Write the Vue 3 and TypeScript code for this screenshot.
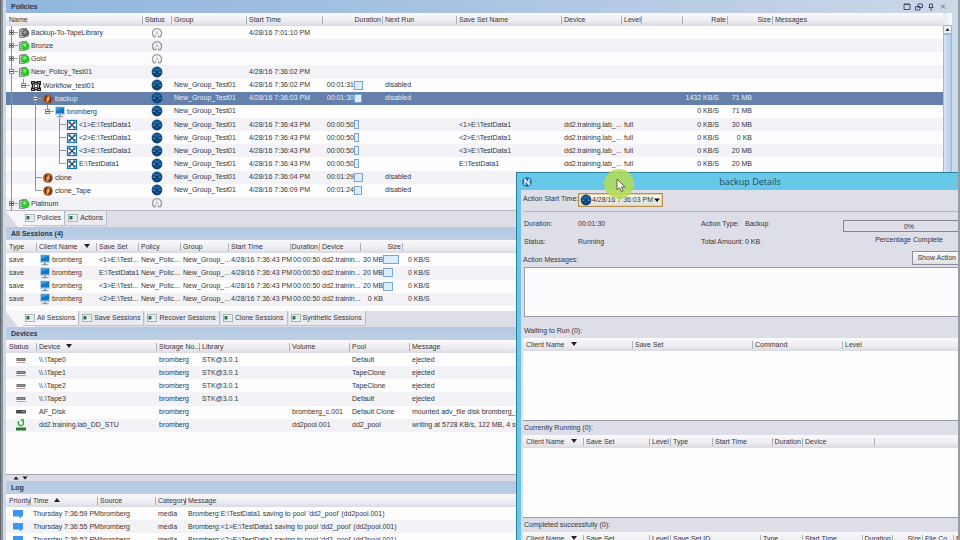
<script setup lang="ts">
import { ref } from 'vue'

interface Column {
  label: string
  width?: number
  right?: boolean
  sort?: 'up' | 'down'
}

interface PolicyRow {
  guides: string[]
  icon: string
  name: string
  running: boolean
  group?: string
  start?: string
  duration?: string
  bar?: number
  next?: string
  saveSet?: string
  device?: string
  level?: string
  rate?: string
  size?: string
  selected?: boolean
}

const policyColumns: Column[] = [
  { label: 'Name', width: 136 },
  { label: 'Status', width: 29 },
  { label: 'Group', width: 75 },
  { label: 'Start Time', width: 76 },
  { label: 'Duration', width: 60, right: true },
  { label: 'Next Run', width: 74 },
  { label: 'Save Set Name', width: 105 },
  { label: 'Device', width: 60 },
  { label: 'Level', width: 20 },
  { label: '', width: 41 },
  { label: 'Rate', width: 45, right: true },
  { label: 'Size', width: 45, right: true },
  { label: 'Messages' },
]

const group = 'New_Group_Test01'
const device = 'dd2.training.lab_...'

const policies: PolicyRow[] = [
  { guides: ['plus'], icon: 'policy-off', name: 'Backup-To-TapeLibrary', running: false, start: '4/28/16 7:01:10 PM' },
  { guides: ['plus'], icon: 'policy', name: 'Bronze', running: false },
  { guides: ['plus'], icon: 'policy', name: 'Gold', running: false },
  { guides: ['minus'], icon: 'policy', name: 'New_Policy_Test01', running: true, start: '4/28/16 7:36:02 PM' },
  { guides: ['line', 'minus last'], icon: 'workflow', name: 'Workflow_test01', running: true, group, start: '4/28/16 7:36:02 PM', duration: '00:01:31', bar: 9, next: 'disabled' },
  { guides: ['line', 'none', 'minus'], icon: 'action', name: 'backup', running: true, group, start: '4/28/16 7:36:03 PM', duration: '00:01:30', bar: 8, next: 'disabled', rate: '1432 KB/S', size: '71 MB', selected: true },
  { guides: ['line', 'none', 'line', 'minus last'], icon: 'client', name: 'bromberg', running: true, group, rate: '0 KB/S', size: '71 MB' },
  { guides: ['line', 'none', 'line', 'none', 'tee'], icon: 'saveset', name: '<1>E:\\TestData1', running: true, group, start: '4/28/16 7:36:43 PM', duration: '00:00:50', bar: 5, saveSet: '<1>E:\\TestData1', device, level: 'full', rate: '0 KB/S', size: '30 MB' },
  { guides: ['line', 'none', 'line', 'none', 'tee'], icon: 'saveset', name: '<2>E:\\TestData1', running: true, group, start: '4/28/16 7:36:43 PM', duration: '00:00:50', bar: 5, saveSet: '<2>E:\\TestData1', device, level: 'full', rate: '0 KB/S', size: '0 KB' },
  { guides: ['line', 'none', 'line', 'none', 'tee'], icon: 'saveset', name: '<3>E:\\TestData1', running: true, group, start: '4/28/16 7:36:43 PM', duration: '00:00:50', bar: 5, saveSet: '<3>E:\\TestData1', device, level: 'full', rate: '0 KB/S', size: '20 MB' },
  { guides: ['line', 'none', 'line', 'none', 'tee last'], icon: 'saveset', name: 'E:\\TestData1', running: true, group, start: '4/28/16 7:36:43 PM', duration: '00:00:50', bar: 5, saveSet: 'E:\\TestData1', device, level: 'full', rate: '0 KB/S', size: '20 MB' },
  { guides: ['line', 'none', 'tee'], icon: 'action', name: 'clone', running: true, group, start: '4/28/16 7:36:04 PM', duration: '00:01:29', bar: 9, next: 'disabled' },
  { guides: ['line', 'none', 'tee last'], icon: 'action', name: 'clone_Tape', running: true, group, start: '4/28/16 7:36:09 PM', duration: '00:01:24', bar: 8, next: 'disabled' },
  { guides: ['plus'], icon: 'policy', name: 'Platinum', running: false },
]

const sessionColumns: Column[] = [
  { label: 'Type', width: 30 },
  { label: 'Client Name', width: 60, sort: 'down' },
  { label: 'Save Set', width: 42 },
  { label: 'Policy', width: 42 },
  { label: 'Group', width: 48 },
  { label: 'Start Time', width: 62 },
  { label: 'Duration', width: 29, right: true },
  { label: 'Device', width: 41 },
  { label: 'Size', width: 42, right: true },
  { label: '' },
]

const sessions = [
  { saveSet: '<1>E:\\Test...', size: '30 MB', bar: 16 },
  { saveSet: 'E:\\TestData1', size: '20 MB', bar: 10 },
  { saveSet: '<3>E:\\Test...', size: '20 MB', bar: 10 },
  { saveSet: '<2>E:\\Test...', size: '0 KB', bar: 0 },
]

const deviceColumns: Column[] = [
  { label: 'Status', width: 30 },
  { label: 'Device', width: 120, sort: 'down' },
  { label: 'Storage No...', width: 43 },
  { label: 'Library', width: 90 },
  { label: 'Volume', width: 60 },
  { label: 'Pool', width: 60 },
  { label: 'Message' },
]

const devices = [
  { icon: 'tape', cells: ['\\\\.\\Tape0', 'bromberg', 'STK@3.0.1', '', 'Default', 'ejected'] },
  { icon: 'tape', cells: ['\\\\.\\Tape1', 'bromberg', 'STK@3.0.1', '', 'TapeClone', 'ejected'] },
  { icon: 'tape', cells: ['\\\\.\\Tape2', 'bromberg', 'STK@3.0.1', '', 'TapeClone', 'ejected'] },
  { icon: 'tape', cells: ['\\\\.\\Tape3', 'bromberg', 'STK@3.0.1', '', 'Default', 'ejected'] },
  { icon: 'disk', cells: ['AF_Disk', 'bromberg', '', 'bromberg_c.001', 'Default Clone', 'mounted adv_file disk bromberg_c.001'] },
  { icon: 'writing', cells: ['dd2.training.lab_DD_STU', 'bromberg', '', 'dd2pool.001', 'dd2_pool', 'writing at 5728 KB/s, 122 MB, 4 sessions'] },
]

const logColumns: Column[] = [
  { label: 'Priority', width: 24 },
  { label: 'Time', width: 67, sort: 'up' },
  { label: 'Source', width: 58 },
  { label: 'Category', width: 30 },
  { label: 'Message' },
]

const logs = [
  { time: 'Thursday 7:36:59 PM', message: "Bromberg:E:\\TestData1 saving to pool 'dd2_pool' (dd2pool.001)" },
  { time: 'Thursday 7:36:55 PM', message: "Bromberg:<1>E:\\TestData1 saving to pool 'dd2_pool' (dd2pool.001)" },
  { time: 'Thursday 7:36:52 PM', message: "Bromberg:<2>E:\\TestData1 saving to pool 'dd2_pool' (dd2pool.001)" },
]

const queues: { title: string; kind: string; columns: Column[] }[] = [
  {
    title: 'Waiting to Run (0):',
    kind: 'waiting',
    columns: [
      { label: 'Client Name', width: 109, sort: 'down' },
      { label: 'Save Set', width: 120 },
      { label: 'Command', width: 90 },
      { label: 'Level' },
    ],
  },
  {
    title: 'Currently Running (0):',
    kind: 'running',
    columns: [
      { label: 'Client Name', width: 60, sort: 'down' },
      { label: 'Save Set', width: 66 },
      { label: 'Level', width: 21 },
      { label: 'Type', width: 42 },
      { label: 'Start Time', width: 60 },
      { label: 'Duration', width: 30, right: true },
      { label: 'Device', width: 72 },
      { label: '' },
    ],
  },
  {
    title: 'Completed successfully (0):',
    kind: 'completed',
    columns: [
      { label: 'Client Name', width: 60, sort: 'down' },
      { label: 'Save Set', width: 66 },
      { label: 'Level', width: 21 },
      { label: 'Save Set ID', width: 90 },
      { label: 'Type', width: 42 },
      { label: 'Start Time', width: 60 },
      { label: 'Duration', width: 30, right: true },
      { label: 'Size', width: 30, right: true },
      { label: 'File Co...', width: 31 },
      { label: 'Messages' },
    ],
  },
]

const policyTabs = ['Policies', 'Actions']
const sessionTabs = ['All Sessions', 'Save Sessions', 'Recover Sessions', 'Clone Sessions', 'Synthetic Sessions']
const activePolicyTab = ref('Policies')
const activeSessionTab = ref('All Sessions')
const startTime = ref('4/28/16 7:36:03 PM')
const actionMessages = ref('')
</script>

<template>
  <svg class="defs" aria-hidden="true">
    <symbol id="i-policy" viewBox="0 0 12 12">
      <path d="M1.500 2.500L4 1h5v7l-2.500 2.500h-5z" fill="#8a9a8c" />
      <path d="M1.500 2.500h5v8h-5z" fill="#c3cdc4" stroke="#647566" stroke-width=".6" />
      <path d="M2.500 4.500h3M2.500 6.500h3M2.500 8.500h3" stroke="#5b6b5d" stroke-width=".7" />
      <circle cx="7.500" cy="6.300" r="4" fill="#2fc52c" />
      <circle cx="6.700" cy="5" r="1.700" fill="#85ec7b" />
    </symbol>
    <symbol id="i-policy-off" viewBox="0 0 12 12">
      <path d="M1.500 2.500L4 1h5v7l-2.500 2.500h-5z" fill="#858585" />
      <path d="M1.500 2.500h5v8h-5z" fill="#c6c6c6" stroke="#666" stroke-width=".6" />
      <path d="M2.500 4.500h3M2.500 6.500h3M2.500 8.500h3" stroke="#555" stroke-width=".7" />
      <circle cx="7.500" cy="6.300" r="3.800" fill="#686868" />
      <circle cx="6.800" cy="5.300" r="1.400" fill="#a3a3a3" />
    </symbol>
    <symbol id="i-workflow" viewBox="0 0 12 12">
      <path d="M1 1h4v3.500H1zM6.500 1h4.500v4H8.500v-1h-2zM1 7.500h4V11H1zM7 7.500h4V11H7z" fill="#1e1e1e" />
      <path d="M2.500 4v4M5 2.500h2M5 9.500h2M9.500 5v3" stroke="#1e1e1e" stroke-width="1.400" fill="none" />
      <circle cx="6" cy="6" r="1.800" fill="none" stroke="#333" />
      <path d="M2.300 2.200h1.200v1H2.300zM8.300 2.200h1.200v1H8.300zM2.300 9h1.200v1H2.300zM8.300 9h1.200v1H8.300z" fill="#fff" />
    </symbol>
    <symbol id="i-action" viewBox="0 0 12 12">
      <circle cx="6" cy="6" r="4.800" fill="#8e4a22" />
      <circle cx="6" cy="6" r="4" fill="#c8702f" />
      <path d="M5.300 2.800C2.700 3.300 2.600 7 4.300 8.300M6.700 9.200C9.300 8.700 9.400 5 7.700 3.700" fill="none" stroke="#4b1f0b" stroke-width="1.200" />
      <path d="M5.200 6.500l2.200-2.700M4.800 8.200l2-2.400" stroke="#ffd9a8" stroke-width=".9" />
    </symbol>
    <symbol id="i-client" viewBox="0 0 12 12">
      <rect x="1" y=".5" width="10" height="8.500" fill="#b4d0e6" />
      <rect x="2" y="1.500" width="8" height="6" fill="#1576c2" />
      <path d="M2 1.500h8L2 5z" fill="#3e9ade" />
      <path d="M5 9h2v1.300h2.500v1h-7v-1H5z" fill="#8294a3" />
    </symbol>
    <symbol id="i-saveset" viewBox="0 0 12 12">
      <rect x="1.500" y="1.500" width="9" height="9" fill="#fff" stroke="#1a73a8" stroke-width="1.200" />
      <path d="M3 3l6 6M9 3L3 9" stroke="#163e66" stroke-width="1.200" />
      <path d="M2.500 2.500h2v2h-2zM7.500 2.500h2v2h-2zM2.500 7.500h2v2h-2zM7.500 7.500h2v2h-2z" fill="#24587f" />
    </symbol>
    <symbol id="i-running" viewBox="0 0 12 12">
      <circle cx="6" cy="6" r="5.400" fill="#0b4379" />
      <path d="M1.500 4.500Q2.500 1.800 5.300 1.300V4.500zM6.700 1.300Q9.500 2 10.400 4.500H6.700z" fill="#1d639c" />
      <path d="M6 3v6" stroke="#3f8dc4" />
      <path d="M1.800 6.200h8.400" stroke="#5fa6d8" />
      <circle cx="6" cy="6.200" r="1.300" fill="#082c50" />
    </symbol>
    <symbol id="i-idle" viewBox="0 0 12 12">
      <path d="M3.200 9.900A4.600 4.600 0 1 1 8.800 9.900" fill="none" stroke="#979797" stroke-width="1.300" />
      <path d="M2.500 10h2.200V8.200M9.500 10H7.300V8.200" fill="none" stroke="#979797" />
      <path d="M6 3.600V5.500M4 7.500Q6 4.200 8 7.500" fill="none" stroke="#b4b4b4" />
    </symbol>
    <symbol id="i-tab" viewBox="0 0 12 10">
      <rect x="1.500" y="1.500" width="9" height="7" fill="#edf3f1" stroke="#9aa8a6" stroke-width=".8" />
      <path d="M2.500 3h3v3.500h-3z" fill="#2c6f5c" />
      <path d="M6.500 3.500h3M6.500 5.500h3" stroke="#c3cecb" stroke-width=".7" />
    </symbol>
    <symbol id="i-tape" viewBox="0 0 12 12">
      <rect x="1.500" y="4" width="9" height="3" fill="#747474" />
      <path d="M3 5.500h6" stroke="#aaa" stroke-width=".6" />
      <path d="M1.500 8.500h9" stroke="#c09aa6" />
    </symbol>
    <symbol id="i-disk" viewBox="0 0 12 12">
      <rect x="1" y="4" width="10" height="3.500" rx="1" fill="#4b4b4b" />
      <path d="M7 5.500h3" stroke="#bbb" stroke-width=".8" />
    </symbol>
    <symbol id="i-writing" viewBox="0 0 12 12">
      <rect x="1" y="8.500" width="10" height="3" fill="#2f7a35" />
      <path d="M4 2.200A2.600 2.600 0 1 0 8.300 3" fill="none" stroke="#24a82c" stroke-width="1.300" />
      <path d="M5 .3h3.800v3.600z" fill="#24a82c" />
    </symbol>
    <symbol id="i-note" viewBox="0 0 12 10">
      <path d="M1 1h10v6.500H9.500L8.800 9.500 7 7.500H1z" fill="#3e95ee" />
    </symbol>
  </svg>

  <div class="desktop">
    <main class="console">
      <section class="panel policies">
        <header class="title">
          <h2>Policies</h2>
          <div class="tools">
            <button aria-label="Maximize">
              <svg viewBox="0 0 8 8"><path d="M1 1.500h6v5H1zM1 1h6" fill="none" stroke="#41506a" /></svg>
            </button>
            <button aria-label="Float">
              <svg viewBox="0 0 8 8"><path d="M3 1h4.500v3.500H3zM.5 3.500H5V7H.5z" fill="none" stroke="#41506a" /></svg>
            </button>
            <button aria-label="Pin">
              <svg viewBox="0 0 8 8"><path d="M2.500 1h3v3.500h-3zM1.500 4.500h5M4 4.500V8" fill="none" stroke="#41506a" /></svg>
            </button>
            <button aria-label="Close">
              <svg viewBox="0 0 8 8"><path d="M2 1.500l4 4M6 1.500l-4 4" stroke="#65718a" /></svg>
            </button>
          </div>
        </header>
        <div class="scroll">
          <table class="grid policy-table">
            <colgroup>
              <col v-for="(c, i) in policyColumns" :key="i" :style="{ width: c.width ? c.width + 'px' : 'auto' }" />
            </colgroup>
            <thead>
              <tr>
                <th v-for="(c, i) in policyColumns" :key="i" :class="{ right: c.right }">{{ c.label }}</th>
              </tr>
            </thead>
            <tbody>
              <tr v-for="(p, i) in policies" :key="i" :class="{ selected: p.selected }">
                <td class="tree-cell">
                  <div class="tree">
                    <span v-for="(g, k) in p.guides" :key="k" class="guide" :class="g"></span>
                    <svg class="icon"><use :href="'#i-' + p.icon" /></svg>
                    <span class="label">{{ p.name }}</span>
                  </div>
                </td>
                <td class="center"><svg class="icon"><use :href="p.running ? '#i-running' : '#i-idle'" /></svg></td>
                <td>{{ p.group }}</td>
                <td>{{ p.start }}</td>
                <td>
                  <div class="metered">
                    <span class="time">{{ p.duration }}</span>
                    <span v-if="p.bar" class="bar" :style="{ width: p.bar + 'px' }"></span>
                  </div>
                </td>
                <td>{{ p.next }}</td>
                <td>{{ p.saveSet }}</td>
                <td>{{ p.device }}</td>
                <td>{{ p.level }}</td>
                <td></td>
                <td class="rate">{{ p.rate }}</td>
                <td class="size">{{ p.size }}</td>
                <td></td>
              </tr>
            </tbody>
          </table>
          <div class="scrollbar">
            <button aria-label="Scroll up">
              <svg viewBox="0 0 8 8"><path d="M1.500 5.500h5L4 2.500z" fill="#111" /></svg>
            </button>
            <div class="thumb"></div>
          </div>
        </div>
        <nav class="tabs">
          <button v-for="t in policyTabs" :key="t" :class="{ active: t === activePolicyTab }" @click="activePolicyTab = t">
            <svg class="tab-icon"><use href="#i-tab" /></svg>{{ t }}
          </button>
        </nav>
      </section>

      <section class="panel sessions">
        <header class="title"><h2>All Sessions (4)</h2></header>
        <div class="body">
          <table class="grid session-table">
            <colgroup>
              <col v-for="(c, i) in sessionColumns" :key="i" :style="{ width: c.width ? c.width + 'px' : 'auto' }" />
            </colgroup>
            <thead>
              <tr>
                <th v-for="(c, i) in sessionColumns" :key="i" :class="{ right: c.right }">
                  {{ c.label }}<span v-if="c.sort" class="sort" :class="c.sort"></span>
                </th>
              </tr>
            </thead>
            <tbody>
              <tr v-for="(s, i) in sessions" :key="i">
                <td>save</td>
                <td>
                  <div class="with-icon"><svg class="icon"><use href="#i-client" /></svg>bromberg</div>
                </td>
                <td>{{ s.saveSet }}</td>
                <td>New_Polic...</td>
                <td>New_Group_...</td>
                <td>4/28/16 7:36:43 PM</td>
                <td>00:00:50</td>
                <td>dd2.trainin...</td>
                <td>
                  <div class="metered">
                    <span class="amount">{{ s.size }}</span>
                    <span v-if="s.bar" class="bar" :style="{ width: s.bar + 'px' }"></span>
                  </div>
                </td>
                <td class="throughput">0 KB/S</td>
              </tr>
            </tbody>
          </table>
        </div>
        <nav class="tabs">
          <button v-for="t in sessionTabs" :key="t" :class="{ active: t === activeSessionTab }" @click="activeSessionTab = t">
            <svg class="tab-icon"><use href="#i-tab" /></svg>{{ t }}
          </button>
        </nav>
      </section>

      <section class="panel devices">
        <header class="title"><h2>Devices</h2></header>
        <div class="body">
          <table class="grid device-table">
            <colgroup>
              <col v-for="(c, i) in deviceColumns" :key="i" :style="{ width: c.width ? c.width + 'px' : 'auto' }" />
            </colgroup>
            <thead>
              <tr>
                <th v-for="(c, i) in deviceColumns" :key="i">
                  {{ c.label }}<span v-if="c.sort" class="sort" :class="c.sort"></span>
                </th>
              </tr>
            </thead>
            <tbody>
              <tr v-for="(d, i) in devices" :key="i">
                <td class="center"><svg class="icon"><use :href="'#i-' + d.icon" /></svg></td>
                <td v-for="(cell, k) in d.cells" :key="k">{{ cell }}</td>
              </tr>
            </tbody>
          </table>
        </div>
        <div class="splitter">
          <button aria-label="Expand up"><svg viewBox="0 0 8 6"><path d="M1.500 4.500h5L4 1.500z" fill="#111" /></svg></button>
          <button aria-label="Expand down"><svg viewBox="0 0 8 6"><path d="M1.500 1.500h5L4 4.500z" fill="#111" /></svg></button>
        </div>
      </section>

      <section class="panel log">
        <header class="title"><h2>Log</h2></header>
        <div class="body">
          <table class="grid">
            <colgroup>
              <col v-for="(c, i) in logColumns" :key="i" :style="{ width: c.width ? c.width + 'px' : 'auto' }" />
            </colgroup>
            <thead>
              <tr>
                <th v-for="(c, i) in logColumns" :key="i">
                  {{ c.label }}<span v-if="c.sort" class="sort" :class="c.sort"></span>
                </th>
              </tr>
            </thead>
            <tbody>
              <tr v-for="(l, i) in logs" :key="i">
                <td class="center"><svg class="note-icon"><use href="#i-note" /></svg></td>
                <td>{{ l.time }}</td>
                <td>bromberg</td>
                <td>media</td>
                <td>{{ l.message }}</td>
              </tr>
            </tbody>
          </table>
        </div>
      </section>
    </main>

    <section class="dialog" role="dialog" aria-labelledby="dialog-title">
      <header class="dialog-bar">
        <svg class="app-icon" viewBox="0 0 10 10">
          <circle cx="5" cy="5" r="4.800" fill="#2172ad" />
          <path d="M3 8V2.500l4 5V2" fill="none" stroke="#fff" stroke-width="1.300" />
        </svg>
        <h1 id="dialog-title">backup Details</h1>
      </header>
      <div class="dialog-body">
        <div class="start-row">
          <label for="start">Action Start Time:</label>
          <div class="picker">
            <svg class="icon"><use href="#i-running" /></svg>
            <select id="start" v-model="startTime">
              <option>4/28/16 7:36:03 PM</option>
            </select>
            <svg class="caret" viewBox="0 0 6 6"><path d="M0 1.500h6L3 5z" fill="#111" /></svg>
          </div>
        </div>
        <div class="summary">
          <dl>
            <dt>Duration:</dt>
            <dd>00:01:30</dd>
            <dt>Status:</dt>
            <dd>Running</dd>
          </dl>
          <dl class="second">
            <dt>Action Type:</dt>
            <dd>Backup</dd>
            <dt>Total Amount:</dt>
            <dd>0 KB</dd>
          </dl>
          <div class="progress">
            <div class="progress-box" role="progressbar" aria-valuenow="0">0%</div>
            <span>Percentage Complete</span>
          </div>
        </div>
        <div class="messages-head">
          <label for="messages">Action Messages:</label>
          <button class="log-button">Show Action Log</button>
        </div>
        <textarea id="messages" v-model="actionMessages" readonly></textarea>
        <div v-for="q in queues" :key="q.kind" class="queue" :class="q.kind">
          <h3>{{ q.title }}</h3>
          <div class="queue-body">
            <table class="grid">
              <colgroup>
                <col v-for="(c, i) in q.columns" :key="i" :style="{ width: c.width ? c.width + 'px' : 'auto' }" />
              </colgroup>
              <thead>
                <tr>
                  <th v-for="(c, i) in q.columns" :key="i" :class="{ right: c.right }">
                    {{ c.label }}<span v-if="c.sort" class="sort" :class="c.sort"></span>
                  </th>
                </tr>
              </thead>
            </table>
          </div>
        </div>
      </div>
    </section>

    <div class="edge"></div>
    <svg class="pointer" viewBox="0 0 34 34" aria-hidden="true">
      <circle cx="17" cy="16" r="15" fill="#b6dc55" fill-opacity=".85" />
      <path d="M15 11v11l2.600-2.300 1.800 4 1.800-.8-1.800-3.900h3.400z" fill="#fff" stroke="#3c4a2a" stroke-width=".8" />
    </svg>
  </div>
</template>

<style>
body {
  margin: 0;
  overflow: hidden;
}
</style>

<style scoped>
.defs {
  position: absolute;
  width: 0;
  height: 0;
}
.desktop {
  position: relative;
  height: 100vh;
  overflow: hidden;
  box-sizing: border-box;
  padding: 0 8px 0 6px;
  background: linear-gradient(90deg, #62666c 0 1px, #8d949b 1px 3px, #cbdae8 3px 100%);
  font-family: 'Liberation Sans', Arial, sans-serif;
  font-size: 7px;
  line-height: 12px;
  color: #353539;
}
button,
select,
textarea {
  font: inherit;
  color: inherit;
  margin: 0;
}
h1,
h2,
h3,
dl,
dd {
  margin: 0;
}
.console {
  display: flex;
  flex-direction: column;
  height: 100%;
}
.panel {
  display: flex;
  flex-direction: column;
}
.title {
  display: flex;
  align-items: center;
  justify-content: space-between;
  height: 13px;
  padding: 0 5px;
  background: linear-gradient(180deg, #b4cae2, #bccfe5);
}
.policies .title {
  background: linear-gradient(90deg, #90b6dd, #a9c4e2 50%, #cdd7e8);
}
.title h2 {
  font-size: 7px;
  color: #24364f;
}
.tools {
  display: flex;
  gap: 4px;
}
.tools button {
  width: 8px;
  height: 8px;
  padding: 0;
  border: 0;
  background: none;
}
.tools svg,
.scrollbar svg,
.splitter svg {
  display: block;
  width: 8px;
}

.grid {
  width: 100%;
  table-layout: fixed;
  border-collapse: collapse;
  background: #fdfdfe;
}
.grid th {
  height: 13px;
  padding: 0 0 0 3px;
  font-weight: normal;
  text-align: left;
  white-space: nowrap;
  background: linear-gradient(180deg, #fafafc, #ededf2 60%, #dadae1);
}
.grid th + th {
  background:
    linear-gradient(#aeb0b8, #aeb0b8) 0 50% / 1px 8px no-repeat,
    linear-gradient(180deg, #fafafc, #ededf2 60%, #dadae1);
}
.grid th.right {
  padding: 0 1px 0 0;
  text-align: right;
}
.grid td {
  height: 13px;
  padding: 0 0 0 3px;
  white-space: nowrap;
}
.grid tbody tr:nth-child(even) {
  background: #f2f2f7;
}
.grid tbody tr.selected {
  background: #6480ab;
  color: #e9eef7;
}
.grid td.center {
  padding: 0;
  text-align: center;
}
.session-table {
  height: 66px;
}
.device-table {
  height: 92px;
}
.sort {
  display: inline-block;
  margin-left: 6px;
  border: 3px solid transparent;
}
.sort.down {
  border-top: 4px solid #222;
  border-bottom: 0;
  vertical-align: 1px;
}
.sort.up {
  border-bottom: 4px solid #222;
  border-top: 0;
  vertical-align: 1px;
}
.icon {
  display: block;
  flex: none;
  width: 12px;
  height: 12px;
}
.center .icon,
.note-icon {
  display: block;
  margin: 0 auto;
}
.note-icon {
  width: 12px;
  height: 10px;
}

.scroll {
  display: flex;
  height: 198px;
  border-bottom: 1px solid #b9b9c4;
  box-sizing: border-box;
}
.policy-table {
  flex: 1;
  height: 197px;
}
.grid .tree-cell {
  padding: 0;
}
.tree {
  display: flex;
  align-items: center;
  height: 14px;
  margin-bottom: -1px;
}
.tree .label {
  padding-left: 1px;
}
.guide {
  position: relative;
  align-self: stretch;
  width: 12px;
}
.guide::before {
  content: '';
  position: absolute;
  top: 0;
  bottom: 0;
  left: 5px;
  border-left: 1px solid #a08c8c;
}
.guide.none::before {
  display: none;
}
.guide.last::before {
  bottom: 50%;
}
.guide.tee::after {
  content: '';
  position: absolute;
  top: 6px;
  left: 6px;
  right: 0;
  border-top: 1px solid #9a9aa0;
}
.guide.plus::after,
.guide.minus::after {
  content: '';
  position: absolute;
  top: 4px;
  left: 3px;
  width: 5px;
  height: 5px;
  box-sizing: border-box;
  border: 1px solid #8c8c94;
  background: linear-gradient(#444, #444) 50% 50% / 3px 1px no-repeat #fff;
}
.guide.plus::after {
  background:
    linear-gradient(#444, #444) 50% 50% / 3px 1px no-repeat,
    linear-gradient(#444, #444) 50% 50% / 1px 3px no-repeat #fff;
}
.guide.plus,
.guide.minus {
  background: linear-gradient(#9a9aa0, #9a9aa0) 100% 6px / 4px 1px no-repeat;
}
.metered {
  display: flex;
  align-items: center;
  height: 13px;
}
.metered .time {
  min-width: 29px;
}
.metered .time,
.metered .amount {
  text-align: right;
}
.metered .amount {
  width: 20px;
}
.metered .bar {
  box-sizing: border-box;
  height: 9px;
  border: 1px solid #7ba6cf;
  background: #dcedfb;
}
.grid td.rate {
  padding: 0 8px 0 0;
  text-align: right;
}
.grid td.size {
  padding: 0 20px 0 0;
  text-align: right;
}
.grid td.throughput {
  padding-left: 6px;
}
.scrollbar {
  width: 9px;
  padding-top: 12px;
  background: linear-gradient(90deg, #e6ebf3, #f7f9fc);
}
.scrollbar button {
  display: block;
  width: 9px;
  height: 9px;
  padding: 0;
  border: 1px solid #a9b4c6;
  background: #eef2f8;
}
.scrollbar svg {
  width: 7px;
}
.thumb {
  height: 176px;
  border: 1px solid #a3b8d4;
  box-sizing: border-box;
  background: linear-gradient(90deg, #d9e6f6, #b4cbe8);
}

.tabs {
  display: flex;
  align-items: flex-start;
  gap: 1px;
  height: 16px;
  padding-left: 17px;
  background: linear-gradient(52deg, #d9d9e4 9px, #f5f5fa 10px 22px, #dedee8 23px);
}
.tabs button {
  display: flex;
  align-items: center;
  gap: 1px;
  height: 15px;
  padding: 0 3px 0 1px;
  border: 0;
  border-right: 1px solid #bcbcc9;
  border-bottom: 1px solid #c3c3cf;
  background: #eaeaf1;
  white-space: nowrap;
}
.tabs button.active {
  background: #f5f5fa;
}
.tab-icon {
  width: 12px;
  height: 10px;
}

.with-icon {
  display: flex;
  align-items: center;
  gap: 1px;
}
.body {
  overflow: hidden;
  background: #fdfdfe;
}
.sessions .body {
  height: 71px;
}
.devices .body {
  height: 134px;
}
.splitter {
  display: flex;
  gap: 1px;
  height: 6px;
  padding-left: 6px;
  border-top: 1px solid #a8a8b3;
  background: #dcdce6;
}
.splitter button {
  width: 8px;
  height: 6px;
  padding: 0;
  border: 0;
  background: none;
}
.log {
  flex: 1;
  min-height: 0;
}
.log .body {
  flex: 1;
}

.dialog {
  position: absolute;
  top: 172px;
  left: 516px;
  right: -24px;
  bottom: 0;
  display: flex;
  flex-direction: column;
  box-sizing: border-box;
  border: 1px solid #2c7e9f;
  border-bottom: 0;
  background: #67c8e8;
}
.dialog-bar {
  display: flex;
  align-items: center;
  height: 17px;
  padding: 0 15px 0 5px;
}
.app-icon {
  width: 10px;
  height: 10px;
}
.dialog-bar h1 {
  flex: 1;
  font: 9px/17px 'Open Sans', 'Noto Sans', sans-serif;
  text-align: center;
  color: #1f4a63;
}
.dialog-body {
  display: flex;
  flex: 1;
  flex-direction: column;
  min-height: 0;
  margin: 0 4px;
  padding: 0 4px 0 2px;
  overflow: hidden;
  background: #dedee8;
}
.dialog-body > * {
  flex: none;
}
.start-row {
  display: flex;
  align-items: flex-start;
  gap: 1px;
  height: 22px;
  padding-top: 3px;
  box-sizing: border-box;
  border-bottom: 1px solid #b4b4bf;
}
.start-row label {
  width: 54px;
  white-space: nowrap;
}
.picker {
  display: flex;
  align-items: center;
  box-sizing: border-box;
  width: 85px;
  height: 14px;
  padding: 0 2px 0 1px;
  border: 1px solid #b98e4e;
  background: linear-gradient(#fbfbf6, #e2decf);
  box-shadow: inset 0 0 0 1px #ecd2a2;
}
.picker select {
  flex: 1;
  min-width: 0;
  padding: 0;
  border: 0;
  background: none;
  appearance: none;
}
.caret {
  width: 6px;
  height: 6px;
}
.summary {
  display: flex;
  height: 39px;
  padding: 4px 0 0 1px;
  box-sizing: border-box;
}
.summary dl {
  display: grid;
  grid-template-columns: 54px 1fr;
  grid-auto-rows: 18px;
  width: 177px;
  line-height: 16px;
}
.summary dl.second {
  grid-template-columns: 44px 1fr;
  width: 142px;
}
.progress {
  display: flex;
  flex: 1;
  flex-direction: column;
  align-items: center;
  padding-top: 4px;
  gap: 2px;
}
.progress-box {
  box-sizing: border-box;
  width: 100%;
  height: 12px;
  border: 1px solid #87878f;
  line-height: 11px;
  text-align: center;
}
.messages-head {
  display: flex;
  align-items: flex-end;
  justify-content: space-between;
  height: 16px;
}
.messages-head label {
  line-height: 14px;
}
.log-button {
  width: 63px;
  height: 14px;
  padding: 0 4px;
  align-self: flex-start;
  border: 1px solid #8f8f9a;
  background: linear-gradient(#fbfbfd, #dfdfe6);
  white-space: nowrap;
}
textarea {
  display: block;
  height: 50px;
  margin-left: 1px;
  padding: 2px;
  box-sizing: border-box;
  border: 1px solid #9c9ca6;
  background: #fcfcfe;
  resize: none;
}
.queue h3 {
  height: 14px;
  padding-left: 1px;
  font-size: 7px;
  font-weight: normal;
  line-height: 14px;
}
.queue-body {
  margin-right: -4px;
  border-bottom: 1px solid #9c9ca6;
  background: #fdfdfe;
}
.waiting {
  padding-top: 7px;
}
.waiting .queue-body {
  height: 82px;
}
.running .queue-body {
  height: 82px;
}
.completed .queue-body {
  height: 40px;
}
.edge {
  position: absolute;
  top: 0;
  bottom: 0;
  right: 0;
  width: 2px;
  background: #92a0a4;
}
.pointer {
  position: absolute;
  top: 168px;
  left: 602px;
  width: 34px;
  height: 34px;
}
</style>
